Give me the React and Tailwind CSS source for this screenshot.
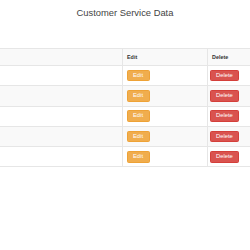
const rows = [1, 2, 3, 4, 5]

export default function App() {
  return (
    <div className="w-[250px] h-[250px] overflow-hidden bg-white font-['Liberation_Sans',Arial,sans-serif] text-[#333]">
      <h3 className="pt-[7px] text-center text-[9.4px] leading-[11px] text-[#444]">
        Customer Service Data
      </h3>

      <div className="mt-[30px] border-b border-[#e6e6e6]">
        {/* header row */}
        <div className="flex h-[17px] bg-[#f9f9f9] border-t border-[#e6e6e6]">
          <div className="w-[122px]" />
          <div className="w-[85px] border-l border-[#e6e6e6] pl-[4px] flex items-center text-[5.4px] font-bold">
            Edit
          </div>
          <div className="flex-1 border-l border-[#e6e6e6] pl-[4px] flex items-center text-[5.4px] font-bold">
            Delete
          </div>
        </div>

        {rows.map((r, i) => (
          <div
            key={r}
            className={`flex h-[20.3px] border-t border-[#e6e6e6] ${i % 2 === 1 ? 'bg-[#f9f9f9]' : 'bg-white'}`}
          >
            <div className="w-[122px]" />
            <div className="w-[85px] border-l border-[#e6e6e6] pl-[3.5px] flex items-center">
              <button className="h-[11.6px] px-[5.5px] rounded-[1.5px] bg-[#f0ad4e] border border-[#eea236] text-white text-[5.8px] leading-none">
                Edit
              </button>
            </div>
            <div className="flex-1 border-l border-[#e6e6e6] pl-[1.5px] flex items-center">
              <button className="h-[11.6px] px-[5.5px] rounded-[1.5px] bg-[#d9534f] border border-[#d43f3a] text-white text-[5.8px] leading-none">
                Delete
              </button>
            </div>
          </div>
        ))}
      </div>
    </div>
  )
}
